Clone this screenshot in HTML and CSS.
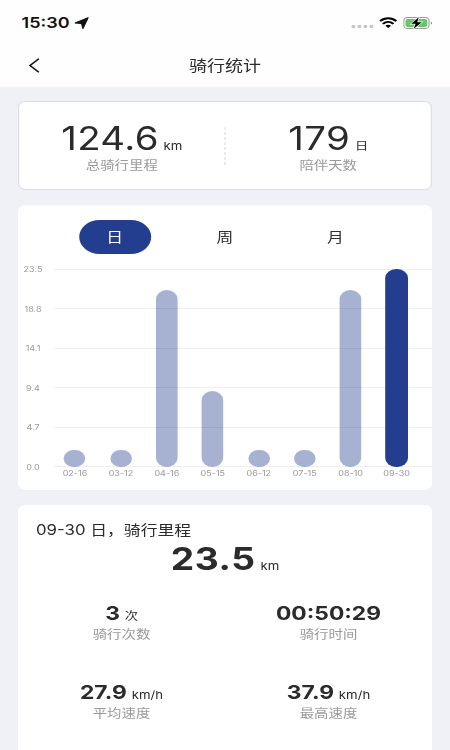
FILE: index.html
```
<!DOCTYPE html>
<html lang="zh-CN">
<head>
  <meta charset="UTF-8" />
  <meta name="viewport" content="width=device-width, initial-scale=1.0"/>
  <title>骑行统计</title>
  <link rel="stylesheet" href="styles.css">
</head>
<body>
  <div class="app">
    <header>
      <div class="status-bar">
        <span class="time">15:30</span>
        <svg class="location" width="12" height="12" viewBox="0 0 12 12"><path d="M11.5.6 7.1 11.5 5.9 6.4.5 5.9Z" fill="#111" stroke="#111" stroke-width="1" stroke-linejoin="round"/></svg>
        <span class="dots"><i></i><i></i><i></i><i></i></span>
        <svg class="wifi" width="15" height="11" viewBox="0 0 15 11" fill="none" stroke="#000" stroke-width="2">
          <path d="M.7 4.1C4.6.2 10.4.2 14.3 4.1M3.1 6.9c2.6-2.5 6.2-2.5 8.8 0"/>
          <path d="M5.1 8.8c1.4-1.4 3.4-1.4 4.8 0L7.5 11Z" fill="#000" stroke="none"/>
        </svg>
        <svg class="battery" width="25" height="12" viewBox="0 0 25 12">
          <rect x=".5" y=".5" width="21" height="11" rx="3" fill="#fff" stroke="#9a9a9a" stroke-width=".9"/>
          <rect x="1.9" y="1.9" width="18.2" height="8.2" rx="1.8" fill="#67c56b"/>
          <path d="M23 4.4c1.4.5 1.4 2.7 0 3.2Z" fill="#888"/>
          <path d="M13 .3 6.6 6.8h3.7L8.8 11.7l6.7-6.5h-3.8Z" fill="#000" stroke="#fff" stroke-width="1.2" paint-order="stroke"/>
        </svg>
      </div>
      <div class="nav">
        <svg class="back" width="9" height="15" viewBox="0 0 9 15"><path d="M8.4.7 1 7.5l7.4 6.8" fill="none" stroke="#111" stroke-width="1.4"/></svg>
        <h1>骑行统计</h1>
      </div>
    </header>

    <main>
      <section class="card total">
        <div class="stat">
          <p class="value"><span class="num">124.6</span><span class="unit">km</span></p>
          <p class="label">总骑行里程</p>
        </div>
        <div class="divider"></div>
        <div class="stat">
          <p class="value"><span class="num">179</span><span class="unit">日</span></p>
          <p class="label">陪伴天数</p>
        </div>
      </section>

      <section class="card chart-card">
        <div class="tabs">
          <button class="active">日</button>
          <button>周</button>
          <button>月</button>
        </div>
        <div class="chart">
          <div class="y-axis">
            <span>23.5</span><span>18.8</span><span>14.1</span><span>9.4</span><span>4.7</span><span>0.0</span>
          </div>
          <div class="plot">
            <div class="bars">
              <div class="bar" style="height: 17.5px"></div>
              <div class="bar" style="height: 17.5px"></div>
              <div class="bar" style="height: 177px"></div>
              <div class="bar" style="height: 76px"></div>
              <div class="bar" style="height: 17.5px"></div>
              <div class="bar" style="height: 17.5px"></div>
              <div class="bar" style="height: 177px"></div>
              <div class="bar current" style="height: 198px"></div>
            </div>
            <div class="x-axis">
              <span>02-16</span><span>03-12</span><span>04-16</span><span>05-15</span><span>06-12</span><span>07-15</span><span>08-10</span><span>09-30</span>
            </div>
          </div>
        </div>
      </section>

      <section class="card detail">
        <h2>09-30 日，骑行里程</h2>
        <p class="value distance"><span class="num">23.5</span><span class="unit">km</span></p>
        <div class="grid">
          <div class="stat">
            <p class="value"><span class="num">3</span><span class="unit">次</span></p>
            <p class="label">骑行次数</p>
          </div>
          <div class="stat">
            <p class="value"><span class="num">00:50:29</span></p>
            <p class="label">骑行时间</p>
          </div>
          <div class="stat">
            <p class="value"><span class="num">27.9</span><span class="unit">km/h</span></p>
            <p class="label">平均速度</p>
          </div>
          <div class="stat">
            <p class="value"><span class="num">37.9</span><span class="unit">km/h</span></p>
            <p class="label">最高速度</p>
          </div>
        </div>
      </section>
    </main>
  </div>
</body>
</html>
```
FILE: styles.css
```
* {
  box-sizing: border-box;
}
html, body {
  margin: 0;
  padding: 0;
  height: 750px;
  overflow: hidden;
  background: #eff1f6;
}
h1, h2, p {
  margin: 0;
  font-weight: 400;
}
/* 375pt layout widened to fill the 450px window */
.app {
  width: 375px;
  height: 750px;
  overflow: hidden;
  transform: scaleX(1.2);
  transform-origin: 0 0;
  font-family: Inter, "Noto Sans CJK SC", sans-serif;
  color: #2b2b2b;
}
header {
  height: 87px;
  background: #fefefe;
}
.status-bar {
  display: flex;
  align-items: center;
  height: 45px;
  padding: 0 14px 0 18px;
}
.time {
  font-size: 15px;
  font-weight: 600;
  color: #111;
}
.location {
  margin: 1px 0 0 4px;
}
.dots {
  display: flex;
  gap: 2px;
  margin: 8px 5px 0 auto;
}
.dots i {
  width: 3px;
  height: 3px;
  border-radius: 1px;
  background: #c4c4c4;
}
.wifi {
  margin-right: 5px;
}
.nav {
  display: flex;
  align-items: center;
  height: 40px;
  padding: 0 24px;
}
.nav h1 {
  flex: 1;
  margin: -2px 9px 0 0;
  font-size: 15px;
  text-align: center;
}
main {
  display: flex;
  flex-direction: column;
  gap: 15px;
  padding: 14px 15px 0;
}
.card {
  background: #fff;
  border-radius: 6px;
}
.value {
  display: flex;
  align-items: baseline;
  justify-content: center;
}
.unit {
  margin-left: 4px;
  font-size: 11px;
}
.stat {
  flex: 1;
  text-align: center;
}
.label {
  font-size: 12px;
  line-height: 18px;
  color: #999;
}
.total {
  display: flex;
  align-items: center;
  height: 89px;
  border: 1px solid #dedede;
}
.total .stat {
  padding-top: 3px;
}
.total .num {
  font-size: 32px;
  letter-spacing: 0.3px;
}
.total .value {
  height: 37px;
  line-height: 37px;
}
.divider {
  height: 38px;
  border-left: 1px dashed #ddd;
}
.chart-card {
  height: 285px;
  padding-top: 15px;
}
.tabs {
  display: flex;
  justify-content: center;
  gap: 32px;
}
.tabs button {
  width: 60px;
  height: 34px;
  padding: 0 0 2px;
  border: none;
  border-radius: 17px;
  background: none;
  font: inherit;
  font-size: 14px;
  color: #333;
}
.tabs .active {
  background: #233e8e;
  color: #fff;
}
.chart {
  display: flex;
  margin-top: 10px;
}
.y-axis {
  display: flex;
  flex-direction: column;
  justify-content: space-between;
  width: 30px;
  height: 209px;
  padding: 1px 5px 0 0;
  text-align: center;
  font-size: 7.5px;
  line-height: 10px;
  color: #999;
}
.plot {
  flex: 1;
  padding-top: 5px;
}
.bars, .x-axis {
  display: grid;
  grid-template-columns: repeat(8, 38.3px);
  justify-items: center;
  margin-left: -1.7px;
}
.bars {
  height: 198px;
  align-items: end;
  background: repeating-linear-gradient(#eee 0 1px, transparent 1px 39.5px) 1.7px 0 no-repeat;
}
.bar {
  width: 18px;
  border-radius: 9px;
  background: rgba(35, 62, 142, 0.4);
}
.bar.current {
  width: 18.6px;
  background: #233e8e;
}
.x-axis {
  padding-top: 2px;
  font-size: 7.5px;
  line-height: 10px;
  color: #999;
}
.detail {
  height: 260px;
  padding-top: 15px;
}
.detail h2 {
  padding-left: 15px;
  font-size: 14px;
  line-height: 20px;
}
.distance {
  height: 37px;
  line-height: 38px;
}
.distance .num {
  font-size: 31px;
  font-weight: 700;
  letter-spacing: 0.5px;
}
.grid {
  display: grid;
  grid-template-columns: 1fr 1fr;
  row-gap: 37px;
  margin-top: 25px;
}
.grid .value {
  height: 23px;
  line-height: 24px;
}
.grid .num {
  font-size: 19px;
  font-weight: 700;
}
.grid .label {
  line-height: 19px;
}
```
